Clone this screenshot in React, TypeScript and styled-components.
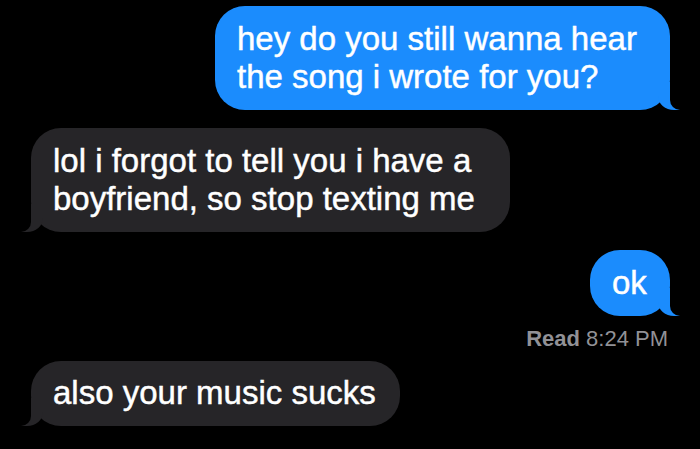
import React from "react";
import styled, { createGlobalStyle, css } from "styled-components";

const GlobalStyle = createGlobalStyle`
  html, body {
    margin: 0;
    padding: 0;
    background: #000;
  }
  body {
    font-family: "Liberation Sans", Arial, sans-serif;
  }
`;

const BLUE = "#1b8cfd";
const GRAY = "#262528";

const Thread = styled.div`
  width: 700px;
  height: 449px;
  box-sizing: border-box;
  padding: 6px 30px 0 31px;
  display: flex;
  flex-direction: column;
  background: #000;
  overflow: hidden;
`;

const Row = styled.div<{ $me?: boolean; $gap: number }>`
  display: flex;
  justify-content: ${(p) => (p.$me ? "flex-end" : "flex-start")};
  margin-top: ${(p) => p.$gap}px;
`;

const Bubble = styled.div<{ $me?: boolean; $w: number }>`
  position: relative;
  width: ${(p) => p.$w}px;
  box-sizing: border-box;
  padding: 13.5px 0 13.5px 22px;
  border-radius: 30px;
  background: ${(p) => (p.$me ? BLUE : GRAY)};
  color: #fff;
  font-size: 33px;
  line-height: 38.5px;
  -webkit-text-stroke: 0.45px #fff;

  &::before,
  &::after {
    content: "";
    position: absolute;
    bottom: 0;
  }

  ${(p) =>
    p.$me
      ? css`
          &::before {
            right: -10px;
            width: 22px;
            height: 28px;
            background: ${BLUE};
            border-bottom-left-radius: 16px 14px;
          }
          &::after {
            right: -26px;
            width: 26px;
            height: 30px;
            background: #000;
            border-bottom-left-radius: 10px;
          }
        `
      : css`
          &::before {
            left: -10px;
            width: 22px;
            height: 28px;
            background: ${GRAY};
            border-bottom-right-radius: 16px 14px;
          }
          &::after {
            left: -26px;
            width: 26px;
            height: 30px;
            background: #000;
            border-bottom-right-radius: 10px;
          }
        `}
`;

const Receipt = styled.div`
  align-self: flex-end;
  margin: 11px 2px 0 0;
  font-size: 22px;
  line-height: 24px;
  color: #919196;
`;

const ReceiptLabel = styled.span`
  font-weight: 700;
`;

export default function App() {
  return (
    <>
      <GlobalStyle />
      <Thread>
        <Row $me $gap={0}>
          <Bubble $me $w={455}>
            hey do you still wanna hear
            <br />
            the song i wrote for you?
          </Bubble>
        </Row>
        <Row $gap={18}>
          <Bubble $w={479}>
            lol i forgot to tell you i have a
            <br />
            boyfriend, so stop texting me
          </Bubble>
        </Row>
        <Row $me $gap={18}>
          <Bubble $me $w={80}>
            ok
          </Bubble>
        </Row>
        <Receipt>
          <ReceiptLabel>Read</ReceiptLabel> 8:24 PM
        </Receipt>
        <Row $gap={10}>
          <Bubble $w={369}>also your music sucks</Bubble>
        </Row>
      </Thread>
    </>
  );
}
